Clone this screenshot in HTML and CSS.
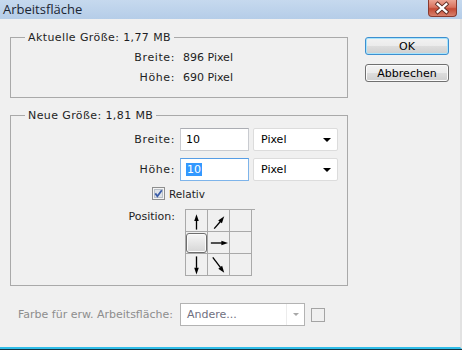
FILE: index.html
```html
<!DOCTYPE html>
<html>
<head>
  <meta charset="UTF-8" />
  <title>Arbeitsfläche</title>
  <link rel="stylesheet" href="styles.css">
</head>
<body>
  <div class="window">
    <div class="titlebar">
      <span class="title">Arbeitsfläche</span>
      <div class="close-btn">
        <svg width="29" height="16" viewBox="0 0 29 16">
          <path d="M10 4 L19 12 M19 4 L10 12" stroke="#5a2a22" stroke-width="4.2" stroke-linecap="square" fill="none"/>
          <path d="M10 4 L19 12 M19 4 L10 12" stroke="#ffffff" stroke-width="2.4" stroke-linecap="square" fill="none"/>
        </svg>
      </div>
    </div>

    <div class="dialog">
      <div class="main">
        <div class="groups">
          <fieldset class="group">
            <legend>Aktuelle Größe: 1,77 MB</legend>
            <div class="info">
              <div class="info-row"><span class="lbl">Breite:</span><span>896 Pixel</span></div>
              <div class="info-row"><span class="lbl">Höhe:</span><span>690 Pixel</span></div>
            </div>
          </fieldset>

          <fieldset class="group group-new">
            <legend>Neue Größe: 1,81 MB</legend>

            <div class="size-row first">
              <span class="lbl">Breite:</span>
              <div class="field">10</div>
              <div class="unit">Pixel<span class="caret"></span></div>
            </div>

            <div class="size-row">
              <span class="lbl">Höhe:</span>
              <div class="field field-focus"><span class="sel">10</span></div>
              <div class="unit">Pixel<span class="caret"></span></div>
            </div>

            <div class="check-row">
              <span class="checkbox">
                <svg width="13" height="13" viewBox="0 0 13 13">
                  <rect x="0.5" y="0.5" width="12" height="12" fill="#f4f4f4" stroke="#8e8f8f"/>
                  <rect x="2.5" y="2.5" width="8" height="8" fill="#dfe3e8" stroke="#b9c0c8"/>
                  <path d="M3.3 6.4 L5.4 9.2 L9.8 3.3" stroke="#3a5ca8" stroke-width="1.8" fill="none"/>
                </svg>
              </span>
              <span class="check-text">Relativ</span>
            </div>

            <div class="pos-row">
              <span class="lbl">Position:</span>
              <div class="anchor">
                <div class="cell">
                  <svg width="22" height="22" viewBox="0 0 22 22">
                    <line x1="11" y1="20" x2="11" y2="10" stroke="#000" stroke-width="1.4"/>
                    <polygon points="11,4 8.6,11 13.4,11" fill="#000"/>
                  </svg>
                </div>
                <div class="cell">
                  <svg width="22" height="22" viewBox="0 0 22 22">
                    <line x1="6.5" y1="19" x2="13" y2="11.5" stroke="#000" stroke-width="1.4"/>
                    <polygon points="17,6 14.6,13.4 10.7,10.4" fill="#000"/>
                  </svg>
                </div>
                <div class="cell"></div>

                <div class="cell"><div class="anchor-on"></div></div>
                <div class="cell">
                  <svg width="22" height="22" viewBox="0 0 22 22">
                    <line x1="3" y1="11" x2="15" y2="11" stroke="#000" stroke-width="1.4"/>
                    <polygon points="21,11 14,8.6 14,13.4" fill="#000"/>
                  </svg>
                </div>
                <div class="cell"></div>

                <div class="cell">
                  <svg width="22" height="22" viewBox="0 0 22 22">
                    <line x1="11" y1="2" x2="11" y2="14" stroke="#000" stroke-width="1.4"/>
                    <polygon points="11,21 8.6,14 13.4,14" fill="#000"/>
                  </svg>
                </div>
                <div class="cell">
                  <svg width="22" height="22" viewBox="0 0 22 22">
                    <line x1="5" y1="3" x2="13" y2="13.5" stroke="#000" stroke-width="1.4"/>
                    <polygon points="17,19 14.8,11.8 10.8,14.8" fill="#000"/>
                  </svg>
                </div>
                <div class="cell"></div>
              </div>
            </div>
          </fieldset>
        </div>

        <div class="actions">
          <button class="btn btn-default">OK</button>
          <button class="btn">Abbrechen</button>
        </div>
      </div>

      <div class="canvas-color">
        <span class="canvas-label">Farbe für erw. Arbeitsfläche:</span>
        <div class="color-select">
          <span class="color-text">Andere...</span>
          <span class="color-arrow"><span class="caret caret-off"></span></span>
        </div>
        <span class="swatch"></span>
      </div>
    </div>
  </div>
</body>
</html>
```

FILE: styles.css
```css
body {
  margin: 0;
  font-family: "DejaVu Sans", Verdana, sans-serif;
  font-size: 11px;
  color: #1e1e24;
}

.window {
  width: 462px;
  height: 350px;
  box-sizing: border-box;
  display: flex;
  flex-direction: column;
  background: #f0f0f0;
  border-bottom: 1px solid #163241;
}

/* title bar */

.titlebar {
  height: 19px;
  flex: none;
  display: flex;
  justify-content: space-between;
  align-items: flex-start;
  background: linear-gradient(#c6d9ee, #b5cde8);
}

.title {
  padding-left: 3px;
  line-height: 19px;
  font-family: "Open Sans", "Noto Sans", sans-serif;
  font-size: 13px;
  color: #1b2533;
}

.close-btn {
  width: 29px;
  height: 17px;
  margin-right: 5px;
  box-sizing: border-box;
  border: 1px solid #8a3a2e;
  border-top: none;
  border-radius: 0 0 4px 4px;
  background: linear-gradient(#eba493 0%, #d9735f 45%, #c44a34 55%, #d8816d 100%);
  display: flex;
}

.close-btn svg {
  margin-left: -1px;
}

/* dialog body */

.dialog {
  flex: 1;
  display: flex;
  flex-direction: column;
  border-bottom: 2px solid #2fbde8;
  border-right: 2px solid #e2e2e2;
}

.main {
  display: flex;
  padding: 12px 0 0 10px;
}

.groups {
  width: 338px;
}

.group {
  margin: 0;
  padding: 0 0 9px;
  min-width: 0;
  border: 1px solid #a9a9a9;
}

.group legend {
  margin-left: 14px;
  padding: 0 3px;
  line-height: 13px;
  letter-spacing: 0.4px;
}

.group-new {
  margin-top: 11px;
}

.lbl {
  text-align: right;
  padding-right: 1px;
  letter-spacing: 0.6px;
}

.info {
  padding-top: 4px;
}

.info-row {
  display: grid;
  grid-template-columns: 165px auto;
  column-gap: 7px;
  line-height: 20px;
}

.size-row {
  display: grid;
  grid-template-columns: 165px 69px 85px;
  column-gap: 4px;
  align-items: center;
  margin-top: 7px;
}

.size-row.first {
  margin-top: 6px;
}

.field {
  height: 23px;
  box-sizing: border-box;
  border: 1px solid #c9cbd0;
  border-top-color: #abadb3;
  background: #fff;
  padding: 0 5px;
  line-height: 21px;
  color: #000;
}

.field-focus {
  border-color: #7eb4ea;
  border-top-color: #569de5;
}

.sel {
  display: inline-block;
  line-height: 13px;
  padding: 0 1px;
  background: #3399ff;
  color: #fff;
}

.unit {
  height: 23px;
  box-sizing: border-box;
  border: 1px solid #dcdcdc;
  border-radius: 2px;
  background: #fff;
  padding: 0 6px 0 7px;
  display: flex;
  align-items: center;
  justify-content: space-between;
  color: #000;
}

.caret {
  width: 0;
  height: 0;
  border-left: 4px solid transparent;
  border-right: 4px solid transparent;
  border-top: 4px solid #000;
}

.caret-off {
  border-left-width: 3px;
  border-right-width: 3px;
  border-top: 3px solid #a8a8a8;
}

.check-row {
  display: flex;
  align-items: center;
  gap: 4px;
  height: 13px;
  margin-top: 6px;
  padding-left: 141px;
}

.checkbox {
  display: flex;
}

.check-text {
  font-size: 10.5px;
}

.pos-row {
  display: grid;
  grid-template-columns: 165px 70px;
  column-gap: 9px;
  align-items: start;
  margin-top: 9px;
}

.pos-row .lbl {
  line-height: 13px;
  padding-top: 1px;
  letter-spacing: 0;
}

.anchor {
  display: grid;
  grid-template-columns: repeat(3, 22px);
  grid-auto-rows: 22px;
  border-left: 1px solid #a9a9a9;
  border-top: 1px solid #a9a9a9;
  width: 69px;
}

.cell {
  border-right: 1px solid #a9a9a9;
  border-bottom: 1px solid #a9a9a9;
  display: flex;
}

.anchor-on {
  flex: 1;
  margin: 1px 0 0 0;
  border: 1px solid #6e6e6e;
  border-radius: 3px;
  background: linear-gradient(#f6f6f6, #d6d6d6);
  box-shadow: inset 0 0 0 1px #fbfbfb;
}

/* buttons */

.actions {
  display: flex;
  flex-direction: column;
  gap: 9px;
  margin-left: 17px;
  padding-top: 6px;
}

.btn {
  width: 84px;
  height: 18px;
  padding: 0;
  font-family: "DejaVu Sans", Verdana, sans-serif;
  font-size: 11px;
  color: #000;
  border: 1px solid #707070;
  border-radius: 3px;
  background: linear-gradient(#f2f2f2 0%, #ebebeb 50%, #dddddd 51%, #cfcfcf 100%);
  box-shadow: inset 0 0 0 1px #fbfbfb;
}

.btn-default {
  border-color: #3c8fd0;
  box-shadow: inset 0 0 0 1px #a8e4fb;
}

/* bottom row */

.canvas-color {
  display: flex;
  align-items: center;
  margin-top: 17px;
  padding-left: 18px;
}

.canvas-label {
  width: 162px;
  color: #8d8d8d;
}

.color-select {
  width: 125px;
  height: 23px;
  box-sizing: border-box;
  border: 1px solid #b3b3b3;
  background: #fff;
  display: flex;
}

.color-text {
  flex: 1;
  padding-left: 6px;
  line-height: 21px;
  color: #6f6f80;
  border-right: 1px solid #ececec;
}

.color-arrow {
  width: 17px;
  display: flex;
  align-items: center;
  justify-content: center;
}

.swatch {
  width: 14px;
  height: 14px;
  box-sizing: border-box;
  margin-left: 6px;
  border: 1px solid #a4a4a4;
}
```
